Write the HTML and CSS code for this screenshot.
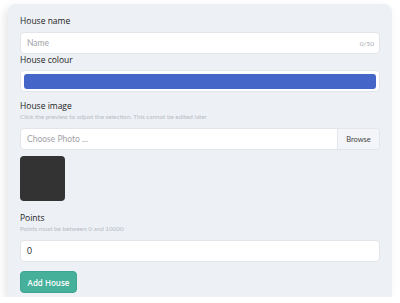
FILE: index.html
```html
<!DOCTYPE html>
<html>
<head>
<meta charset="utf-8">
<link rel="stylesheet" href="styles.css">
</head>
<body>
<div class="card">
  <div class="label">House name</div>
  <div class="input text-input">
    <span class="placeholder">Name</span>
    <span class="counter">0/50</span>
  </div>
  <div class="label">House colour</div>
  <div class="input colour-input"><div class="swatch"></div></div>
  <div class="label spaced">House image</div>
  <div class="help">Click the preview to adjust the selection. This cannot be edited later</div>
  <div class="input file-input">
    <span class="placeholder file-text">Choose Photo ...</span>
    <span class="browse">Browse</span>
  </div>
  <div class="preview"></div>
  <div class="label points-label">Points</div>
  <div class="help">Points must be between 0 and 10000</div>
  <div class="input text-input"><span class="value">0</span></div>
  <button class="add-btn">Add House</button>
</div>
</body>
</html>
```
FILE: styles.css
```css
html, body {
  margin: 0;
  padding: 0;
  background: #ffffff;
}
body {
  padding: 4px 8px 0 8px;
  font-family: "Lato", "Noto Sans", sans-serif;
  color: #2b2b2b;
}
.card {
  background: #edf0f5;
  border-radius: 8px 8px 0 0;
  padding: 11px 12px 4px 12px;
  box-shadow: -3px 3px 8px rgba(0, 0, 0, 0.10);
  display: flex;
  flex-direction: column;
  align-items: stretch;
}
.label {
  font-family: "Open Sans", "Lato", sans-serif;
  font-size: 8.5px;
  font-weight: 500;
  line-height: 12px;
  margin-bottom: 5px;
  color: #222222;
}
.label.spaced {
  margin-top: 8px;
  margin-bottom: 0;
}
.label.points-label {
  margin-top: 11px;
  margin-bottom: 0;
}
.help {
  font-size: 6.3px;
  line-height: 10px;
  color: #b9bcc2;
  margin-top: 0;
  margin-bottom: 6px;
}
.input {
  background: #ffffff;
  border: 1px solid #e2e5ea;
  border-radius: 4px;
  box-sizing: border-box;
  height: 22px;
  display: flex;
  align-items: center;
}
.text-input {
  padding: 0 5px 0 6px;
  justify-content: space-between;
}
.placeholder {
  font-size: 8.5px;
  color: #9fa2a8;
}
.value {
  font-size: 8.5px;
  color: #333;
}
.counter {
  font-size: 6.5px;
  color: #a7aab0;
}
.colour-input {
  height: 22px;
  margin-top: -1px;
  padding: 2px 3px;
  margin-bottom: 0;
}
.swatch {
  flex: 1;
  height: 15px;
  background: #4466c8;
  border-radius: 3px;
}
.file-input {
  overflow: hidden;
  justify-content: space-between;
  padding-left: 6px;
}
.browse {
  align-self: stretch;
  width: 41px;
  background: #f4f5f8;
  border-left: 1px solid #e2e5ea;
  display: flex;
  align-items: center;
  justify-content: center;
  font-size: 7.5px;
  color: #444;
}
.preview {
  width: 45px;
  height: 45px;
  background: #333333;
  border-radius: 4px;
  margin-top: 6px;
}
.add-btn {
  align-self: flex-start;
  margin-top: 9px;
  width: 57px;
  height: 22px;
  border: 1px solid #3fa592;
  border-radius: 4px;
  background: #46b09b;
  color: #ffffff;
  font-family: "Open Sans", "Lato", sans-serif;
  font-size: 8px;
  font-weight: 600;
  padding: 0;
}
```
